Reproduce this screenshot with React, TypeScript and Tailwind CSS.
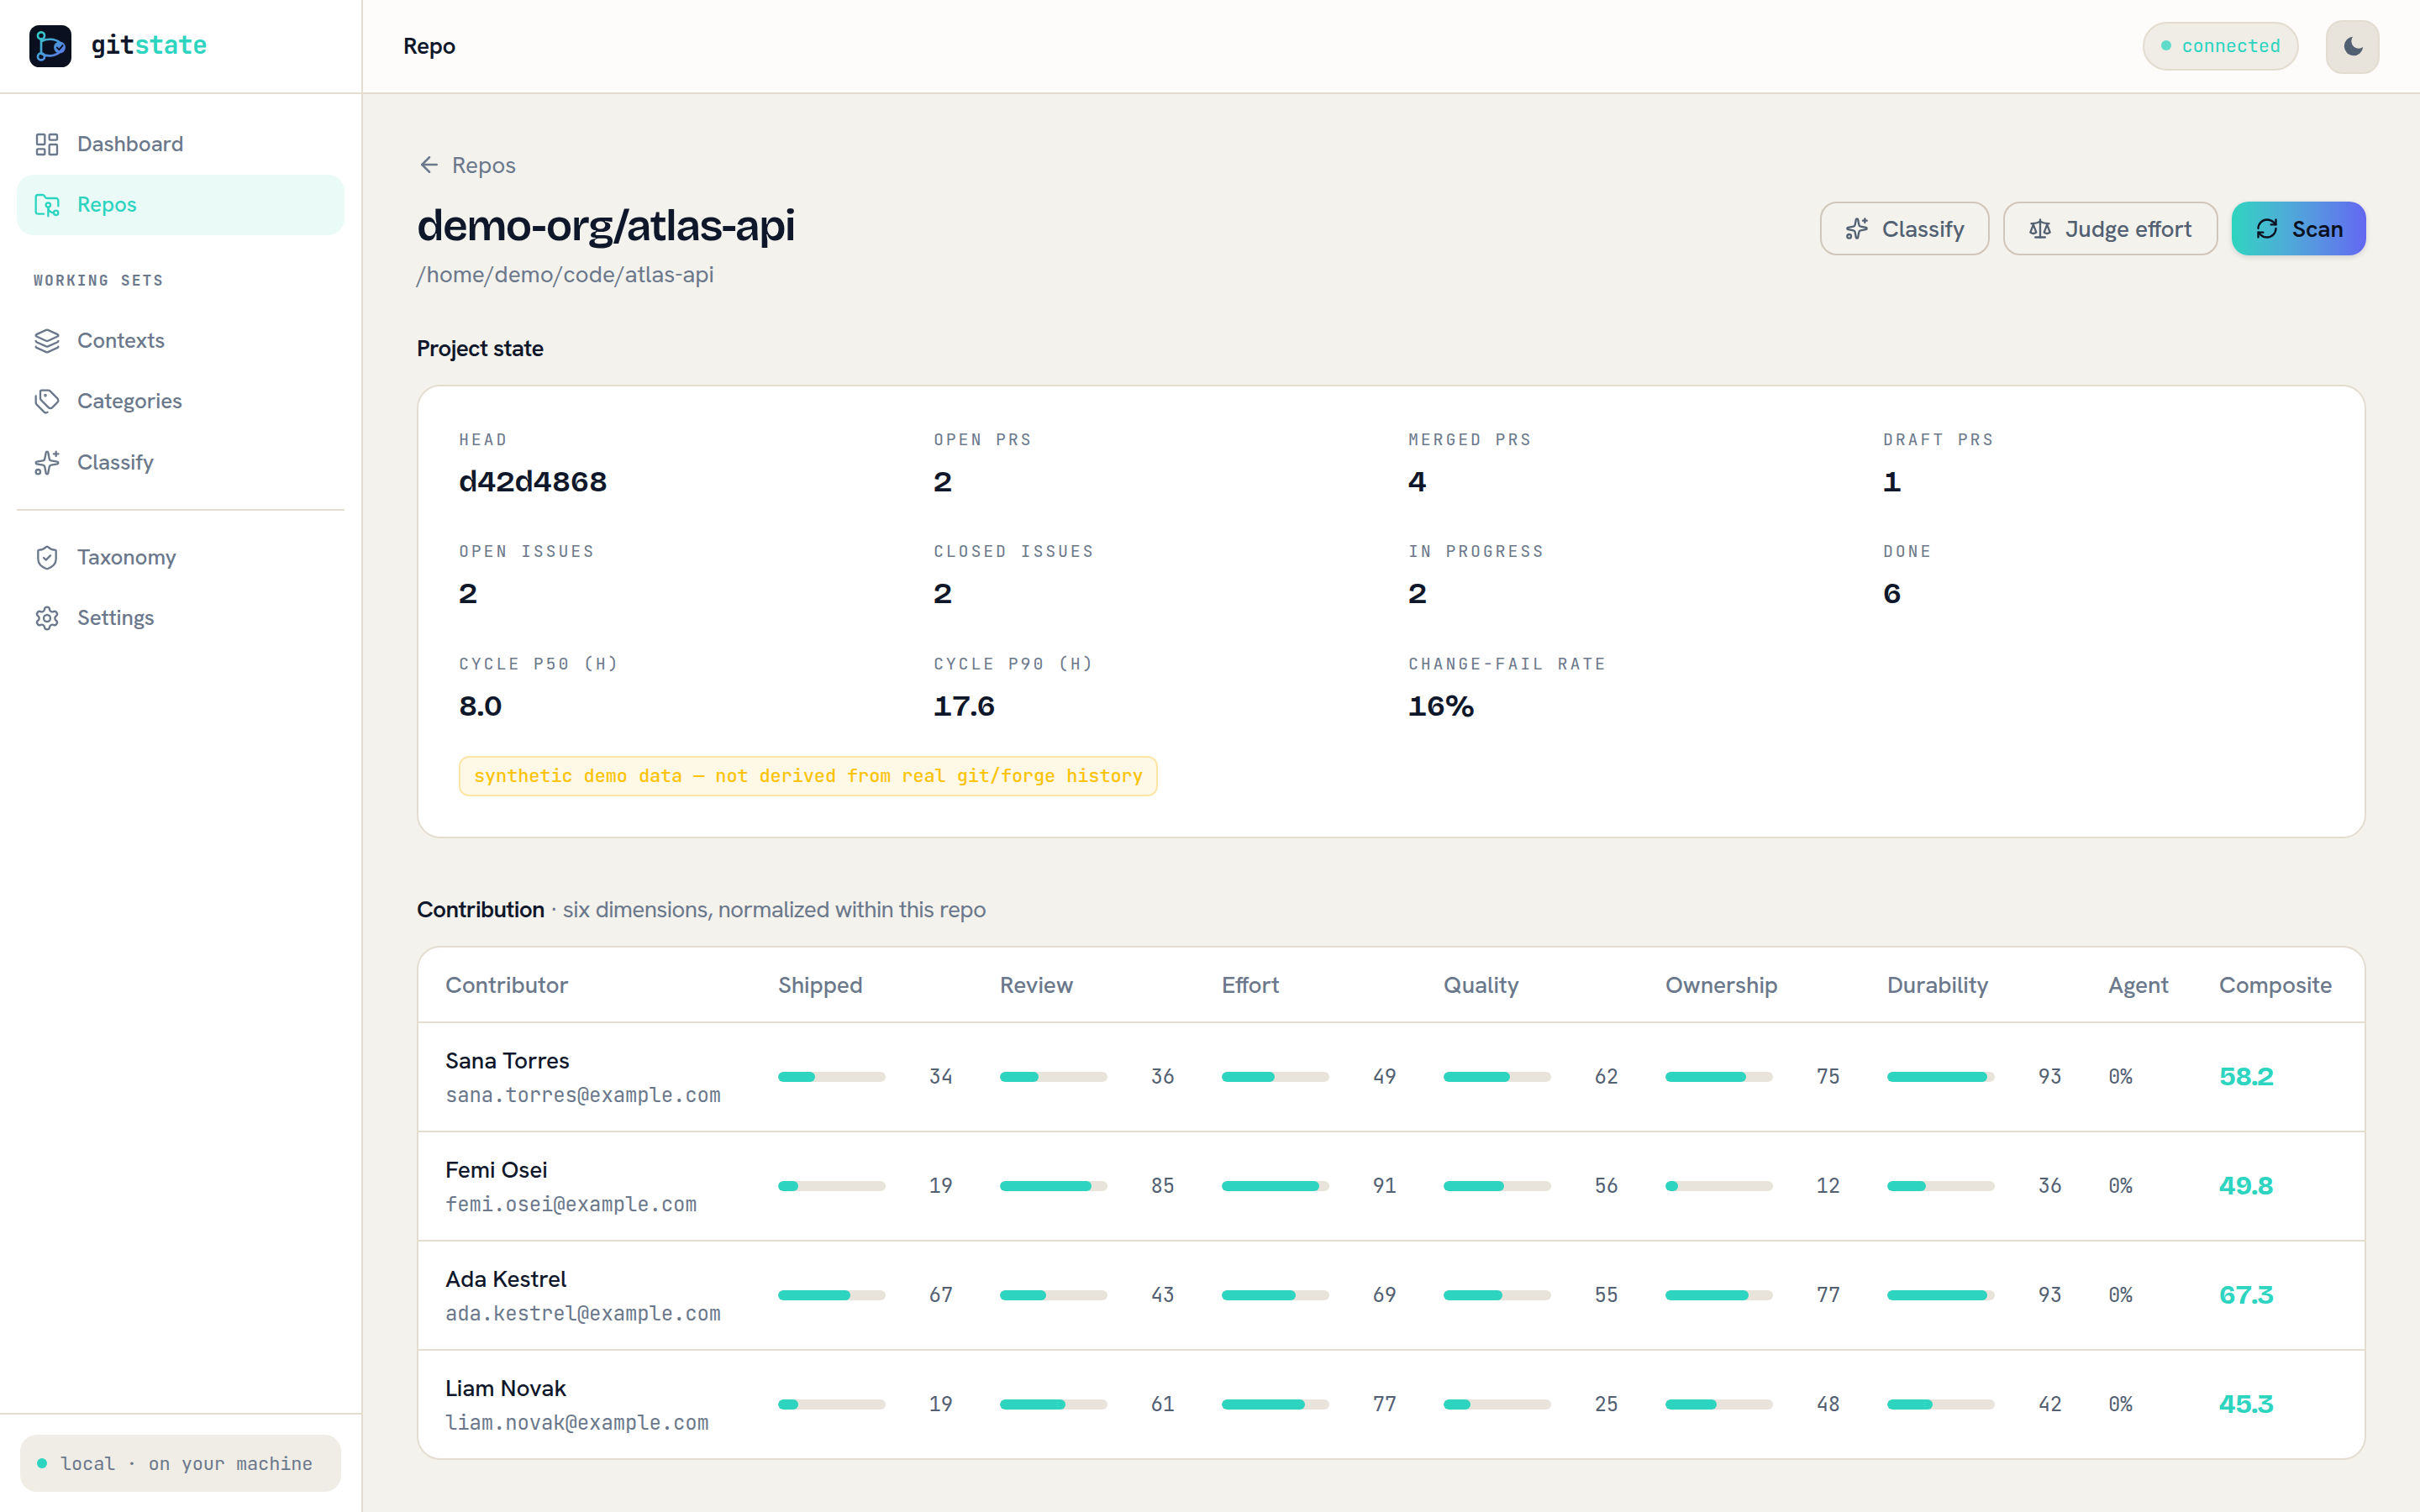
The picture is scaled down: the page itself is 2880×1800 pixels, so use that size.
import {
  ArrowLeft,
  FolderGit2,
  Layers,
  LayoutDashboard,
  RefreshCw,
  Scale,
  Settings,
  ShieldCheck,
  Sparkles,
  Tags,
} from "lucide-react";
import type { LucideIcon } from "lucide-react";

const SANS = "font-['Hanken_Grotesk','Inter',sans-serif]";
const DISPLAY = "font-['Bricolage_Grotesque','Inter',sans-serif]";
const MONO = "font-['JetBrains_Mono','DejaVu_Sans_Mono',monospace]";

const stats = [
  { label: "Head", value: "d42d4868" },
  { label: "Open PRs", value: "2" },
  { label: "Merged PRs", value: "4" },
  { label: "Draft PRs", value: "1" },
  { label: "Open issues", value: "2" },
  { label: "Closed issues", value: "2" },
  { label: "In progress", value: "2" },
  { label: "Done", value: "6" },
  { label: "Cycle p50 (h)", value: "8.0" },
  { label: "Cycle p90 (h)", value: "17.6" },
  { label: "Change-fail rate", value: "16%" },
];

const dimensions = ["Shipped", "Review", "Effort", "Quality", "Ownership", "Durability"];

const contributors = [
  { name: "Sana Torres", email: "sana.torres@example.com", scores: [34, 36, 49, 62, 75, 93], agent: "0%", composite: "58.2" },
  { name: "Femi Osei", email: "femi.osei@example.com", scores: [19, 85, 91, 56, 12, 36], agent: "0%", composite: "49.8" },
  { name: "Ada Kestrel", email: "ada.kestrel@example.com", scores: [67, 43, 69, 55, 77, 93], agent: "0%", composite: "67.3" },
  { name: "Liam Novak", email: "liam.novak@example.com", scores: [19, 61, 77, 25, 48, 42], agent: "0%", composite: "45.3" },
];

function Logo() {
  return (
    <svg width="50" height="50" viewBox="0 0 50 50" fill="none">
      <defs>
        <linearGradient id="mark" x1="8" y1="6" x2="42" y2="44" gradientUnits="userSpaceOnUse">
          <stop stopColor="#2dd4bf" />
          <stop offset="1" stopColor="#6366f1" />
        </linearGradient>
      </defs>
      <rect width="50" height="50" rx="11.5" fill="#0b1020" />
      <g stroke="url(#mark)" strokeWidth="2.7" strokeLinecap="round">
        <path d="M14 16.5V33" />
        <path d="M14.5 19C20 16 30 15.5 36 20.5" />
        <path d="M14.5 34C20 37.5 30 37.5 36 32" />
        <circle cx="14" cy="12.4" r="4" />
        <circle cx="14" cy="37.4" r="4" />
      </g>
      <circle cx="36" cy="26.5" r="6.9" fill="url(#mark)" />
      <path d="M32.8 26.6l2.6 2.5 4.2-5" stroke="#0b1020" strokeWidth="1.9" strokeLinecap="round" strokeLinejoin="round" />
    </svg>
  );
}

function NavItem({ icon: Icon, label, active }: { icon: LucideIcon; label: string; active?: boolean }) {
  return (
    <a
      className={
        active
          ? "flex h-[72px] items-center gap-5 rounded-[20px] bg-[#eafaf7] px-5 text-[26px] font-medium text-[#2dd4bf]"
          : "flex h-[72px] items-center gap-5 rounded-[20px] px-5 text-[26px] font-medium text-[#6b788b]"
      }
    >
      <Icon size={32} strokeWidth={1.75} />
      <span className="pb-0.5 leading-9">{label}</span>
    </a>
  );
}

function Sidebar() {
  return (
    <aside className="flex w-[432px] shrink-0 flex-col border-r-2 border-[#e3dcd0] bg-white">
      <div className="flex h-[112px] items-center gap-[23px] border-b-2 border-[#e3dcd0] pl-[35px]">
        <Logo />
        <span className={`${MONO} pb-[3px] text-[30px] font-bold tracking-[-0.7px] text-[#0f172a]`}>
          git<span className="text-[#2dd4bf]">state</span>
        </span>
      </div>
      <nav className="flex-1 px-5 pt-6">
        <NavItem icon={LayoutDashboard} label="Dashboard" />
        <NavItem icon={FolderGit2} label="Repos" active />
        <div className={`${MONO} mt-10 mb-[22px] pl-5 text-[18px] leading-[28px] font-semibold tracking-[0.12em] text-[#6b788b] uppercase`}>
          Working sets
        </div>
        <NavItem icon={Layers} label="Contexts" />
        <NavItem icon={Tags} label="Categories" />
        <div className="pt-px">
          <NavItem icon={Sparkles} label="Classify" />
        </div>
        <hr className="mt-[19px] mb-5 border-t-2 border-[#e3dcd0]" />
        <NavItem icon={ShieldCheck} label="Taxonomy" />
        <NavItem icon={Settings} label="Settings" />
      </nav>
      <div className="border-t-2 border-[#e3dcd0] p-6">
        <div className={`${MONO} flex h-[68px] items-center gap-4 rounded-[20px] bg-[#f0ede6] px-5 text-[22px] text-[#6b788b]`}>
          <span className="size-3 rounded-full bg-[#2dd4bf]" />
          local · on your machine
        </div>
      </div>
    </aside>
  );
}

function Topbar() {
  return (
    <header className="flex h-[112px] shrink-0 items-center border-b-2 border-[#e3dcd0] bg-[#fdfcfa] px-12">
      <span className="flex-1 pb-0.5 text-[28px] font-semibold tracking-[-0.4px] text-[#0f172a]">Repo</span>
      <div className={`${MONO} mr-8 flex h-[58px] items-center gap-3 rounded-full border-2 border-[#e3dcd0] bg-[#f0ede6] px-5 pb-0.5 text-[22px] text-[#2dd4bf]`}>
        <span className="size-3 rounded-full bg-[#2dd4bf] opacity-75" />
        connected
      </div>
      <button className="mt-0.5 flex size-16 items-center justify-center rounded-[20px] border-2 border-[#e3dcd0] bg-[#e8e3db] pb-0.5 pl-0.5 text-[#526072]">
        <svg width="30" height="30" viewBox="0 0 24 24" fill="currentColor">
          <path d="M21 12.79A9 9 0 1 1 11.21 3 7 7 0 0 0 21 12.79z" />
        </svg>
      </button>
    </header>
  );
}

function ScoreBar({ value }: { value: number }) {
  return (
    <div className="flex w-[208px] items-center justify-between">
      <div className="h-3 w-32 overflow-hidden rounded-full bg-[#e8e3db]">
        <div className="h-full rounded-full bg-[#2dd4bf]" style={{ width: `${value}%` }} />
      </div>
      <span className={`${MONO} text-[24px] leading-8 text-[#526072]`}>{value}</span>
    </div>
  );
}

function ContributionTable() {
  const cols = "grid grid-cols-[396px_repeat(5,264px)_263px_132px_1fr] items-center pl-8";
  return (
    <div className="overflow-hidden rounded-[28px] border-2 border-[#e3dcd0] bg-white">
      <div className={`${cols} h-[88px] text-[28px] leading-10 font-medium text-[#6b788b]`}>
        <span>Contributor</span>
        {dimensions.map((d) => (
          <span key={d}>{d}</span>
        ))}
        <span>Agent</span>
        <span>Composite</span>
      </div>
      {contributors.map((c) => (
        <div key={c.email} className={`${cols} h-[130px] border-t-2 border-[#e3dcd0]`}>
          <div>
            <div className="text-[28px] leading-10 font-medium text-[#0f172a]">{c.name}</div>
            <div className={`${MONO} mt-1 text-[24px] leading-9 text-[#6b788b]`}>{c.email}</div>
          </div>
          {c.scores.map((s, i) => (
            <ScoreBar key={dimensions[i]} value={s} />
          ))}
          <span className={`${MONO} text-[24px] leading-8 text-[#526072]`}>{c.agent}</span>
          <span className={`${DISPLAY} text-[32px] leading-10 font-bold tracking-[-0.02em] text-[#2dd4bf] tabular-nums`}>{c.composite}</span>
        </div>
      ))}
    </div>
  );
}

export default function App() {
  return (
    <div className={`${SANS} flex h-[1800px] w-[2880px] overflow-hidden bg-[#f4f2ed] tracking-[-0.14px]`}>
      <Sidebar />
      <div className="flex min-w-0 flex-1 flex-col">
        <Topbar />
        <main className="flex-1 px-16 pt-16">
          <a className="flex items-center gap-3 text-[28px] leading-10 text-[#6b788b]">
            <ArrowLeft size={30} />
            Repos
          </a>

          {/* Title row */}
          <div className="mt-4 flex items-start justify-between">
            <div>
              <h1 className={`${DISPLAY} text-[52px] leading-[74px] font-semibold tracking-[-0.033em] text-[#0f172a]`}>
                demo-org/atlas-api
              </h1>
              <p className="text-[28px] leading-10 text-[#6b788b]">/home/demo/code/atlas-api</p>
            </div>
            <div className="mt-2 flex gap-4 text-[28px] leading-10 font-medium">
              <button className="flex h-16 w-[202px] items-center gap-4 rounded-[20px] border-2 border-[#cfc7b9] pl-7 text-[#526072]">
                <Sparkles size={28} />
                Classify
              </button>
              <button className="flex h-16 w-64 items-center gap-4 rounded-[20px] border-2 border-[#cfc7b9] pl-7 text-[#526072]">
                <Scale size={28} />
                Judge effort
              </button>
              <button className="flex h-16 w-40 items-center gap-4 rounded-[20px] bg-linear-to-r from-[#2dd4bf] to-[#6366f1] pl-7 font-semibold text-[#0b1020] shadow-[0_2px_6px_rgba(15,23,42,0.14)]">
                <RefreshCw size={28} />
                Scan
              </button>
            </div>
          </div>

          {/* Project state */}
          <h2 className="mt-12 text-[28px] leading-10 font-semibold tracking-[-0.7px] text-[#0f172a]">Project state</h2>
          <section className="mt-6 h-[540px] rounded-[28px] border-2 border-[#e3dcd0] bg-white p-12">
            <div className="grid grid-cols-4 gap-10">
              {stats.map((s) => (
                <div key={s.label}>
                  <div className={`${MONO} h-[31px] text-[20px] leading-[31px] tracking-[0.14em] text-[#6b788b] uppercase`}>{s.label}</div>
                  <div className={`${DISPLAY} mt-[7px] text-[36px] leading-[55.33px] font-semibold text-[#0f172a] tabular-nums`}>
                    {s.value}
                  </div>
                </div>
              ))}
            </div>
            <span className={`${MONO} mt-8 inline-flex h-12 items-center rounded-xl border-2 border-[#fbe6a6] bg-[#fef8e6] pr-[15px] pl-4 text-[22px] font-medium text-[#fbc40b]`}>
              synthetic demo data — not derived from real git/forge history
            </span>
          </section>

          {/* Contribution */}
          <h2 className="mt-16 mb-6 text-[28px] leading-10 font-semibold tracking-[-0.7px] text-[#0f172a]">
            Contribution{" "}
            <span className="font-normal text-[#6b788b]">· six dimensions, normalized within this repo</span>
          </h2>
          <ContributionTable />
        </main>
      </div>
    </div>
  );
}
